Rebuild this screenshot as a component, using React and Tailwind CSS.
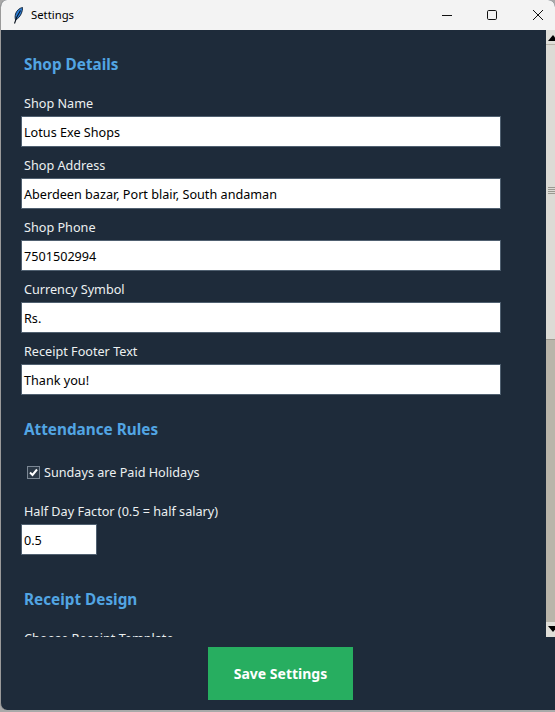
const fields = [
  { label: "Shop Name", value: "Lotus Exe Shops" },
  { label: "Shop Address", value: "Aberdeen bazar, Port blair, South andaman" },
  { label: "Shop Phone", value: "7501502994" },
  { label: "Currency Symbol", value: "Rs." },
  { label: "Receipt Footer Text", value: "Thank you!" },
];

function Field({ label, value }) {
  return (
    <div className="flex flex-col">
      <div className="h-[31px] pl-[3px] pt-[8px] text-[12.65px] leading-[20px] text-[#ecf0f1]">{label}</div>
      <div className="h-[31px] w-[480px] border border-[#506070] bg-white pl-[2px] text-[12.65px] leading-[30px] text-black">{value}</div>
    </div>
  );
}

function Heading({ children, className }) {
  return <h2 className={"pl-[3px] text-[15.3px] font-bold leading-[22px] text-[#52a5e3] " + className}>{children}</h2>;
}

function Feather() {
  return (
    <svg width="10" height="17" viewBox="0 0 10 17" className="ml-[12px]">
      <path d="M9.5 0.5C6.5 1 3.5 3.5 2.5 7 2 9.2 2 11 2.5 12.8 5 11.8 7 9.5 8.2 6.8 9.2 4.5 9.7 2 9.5 0.5Z" fill="#2f7fd6" stroke="#0d1d30" strokeWidth="0.9" />
      <path d="M7.5 3.5C5.5 6.5 3 11 1.5 16.5" fill="none" stroke="#0b1420" strokeWidth="1.1" />
    </svg>
  );
}

function Scrollbar() {
  return (
    <div className="flex w-[9px] flex-col bg-[#b9b5aa]">
      <div className="relative h-[15px] border-b border-[#b9b5aa] bg-[#e0dfd9]">
        <div className="absolute left-[2px] top-[5px] h-0 w-0 border-x-[5px] border-b-[6px] border-x-transparent border-b-black" />
      </div>
      <div className="flex h-[295px] flex-col justify-center gap-[1px] border-b border-[#9d9a90] bg-[#dcdbd5] pb-[4px] pl-[2px]">
        <div className="h-[1px] bg-[#9a9890]" />
        <div className="h-[1px] bg-[#9a9890]" />
        <div className="h-[1px] bg-[#9a9890]" />
        <div className="h-[1px] bg-[#9a9890]" />
      </div>
      <div className="flex-1" />
      <div className="relative h-[15px] bg-[#e0dfd9]">
        <div className="absolute left-[2px] top-[4px] h-0 w-0 border-x-[5px] border-t-[6px] border-x-transparent border-t-black" />
      </div>
    </div>
  );
}

export default function App() {
  return (
    <div className="h-[712px] w-[555px] overflow-hidden bg-[#a9a9a9] font-['Noto_Sans',sans-serif]">
      <div className="flex h-[710px] flex-col overflow-hidden rounded-t-[7px] rounded-bl-[7px] border-l border-[#9a9a9a] bg-[#1e2b3a]">
        <div className="flex h-[30px] shrink-0 items-center bg-[#f3f3f3]">
          <Feather />
          <span className="ml-[8px] text-[11.3px] text-black">Settings</span>
          <div className="ml-auto flex items-center">
            <svg width="12" height="12" viewBox="0 0 12 12" className="mr-[33px]"><path d="M1 6.5H11" stroke="#111" strokeWidth="1" /></svg>
            <svg width="12" height="12" viewBox="0 0 12 12" className="mr-[34px]"><rect x="1.5" y="1.5" width="9" height="9" rx="1.2" fill="none" stroke="#111" strokeWidth="1" /></svg>
            <svg width="12" height="12" viewBox="0 0 12 12" className="mr-[11px]"><path d="M1 1L11 11M11 1L1 11" stroke="#111" strokeWidth="1" /></svg>
          </div>
        </div>

        <div className="flex h-[607px] shrink-0">
          <div className="min-w-0 flex-1 overflow-hidden pl-[20px] pt-[23px]">
            <Heading>Shop Details</Heading>
            <div className="mt-[10px] flex flex-col">
              {fields.map(f => <Field key={f.label} label={f.label} value={f.value} />)}
            </div>
            <Heading className="mt-[23px]">Attendance Rules</Heading>
            <div className="ml-[6px] mt-[22px] flex items-center gap-[4px]">
              <div className="flex h-[13px] w-[13px] items-center justify-center border border-[#7b8794] bg-[#2b3846]">
                <svg width="11" height="11" viewBox="0 0 11 11"><path d="M2 5.5L4.5 8L9 2.5" fill="none" stroke="#fff" strokeWidth="2" /></svg>
              </div>
              <span className="text-[12.65px] leading-[20px] text-[#ecf0f1]">Sundays are Paid Holidays</span>
            </div>
            <div className="mt-[19px] h-[21px] pl-[3px] text-[12.65px] leading-[20px] text-[#ecf0f1]">Half Day Factor (0.5 = half salary)</div>
            <div className="mt-[2px] h-[31px] w-[76px] border border-[#506070] bg-white pl-[2px] text-[12.65px] leading-[30px] text-black">0.5</div>
            <Heading className="mt-[33px]">Receipt Design</Heading>
            <div className="mt-[18px] pl-[3px] text-[12.65px] leading-[20px] text-[#ecf0f1]">Choose Receipt Template</div>
          </div>
          <Scrollbar />
        </div>

        <div className="flex flex-1 justify-center pl-[5px] pt-[10px]">
          <button className="h-[53px] w-[145px] bg-[#27ae60] text-[14px] font-bold text-white">Save Settings</button>
        </div>
      </div>
    </div>
  );
}
